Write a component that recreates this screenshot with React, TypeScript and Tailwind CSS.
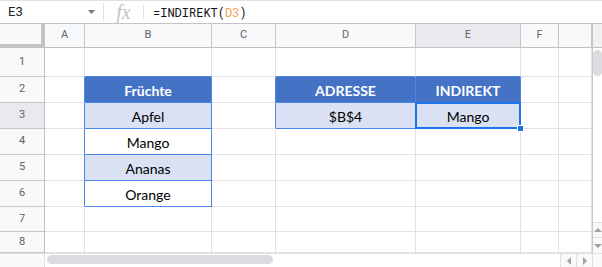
import React from "react";

const COLS = ["A", "B", "C", "D", "E", "F", "G"];
const ROWS = [1, 2, 3, 4, 5, 6, 7, 8];

type Kind = "head" | "light" | "white";
const table: Record<string, { kind: Kind; text: string }> = {
  B2: { kind: "head", text: "Früchte" },
  B3: { kind: "light", text: "Apfel" },
  B4: { kind: "white", text: "Mango" },
  B5: { kind: "light", text: "Ananas" },
  B6: { kind: "white", text: "Orange" },
  D2: { kind: "head", text: "ADRESSE" },
  E2: { kind: "head", text: "INDIREKT" },
  D3: { kind: "light", text: "$B$4" },
  E3: { kind: "light", text: "Mango" },
};

const inT = (c: number, r: number) => !!table[`${COLS[c]}${r}`];

function Cell({ c, r }: { c: number; r: number }) {
  const key = `${COLS[c]}${r}`;
  const t = table[key];
  const blueR = inT(c, r) || inT(c + 1, r);
  const blueB = inT(c, r) || inT(c, r + 1);
  const bg = t
    ? t.kind === "head"
      ? "bg-[#4472c4]"
      : t.kind === "light"
      ? "bg-[#d9e1f2]"
      : "bg-white"
    : "bg-white";
  const br = blueR ? "border-r-[#4a86e8]" : "border-r-[#e2e2e2]";
  const bb = blueB ? "border-b-[#4a86e8]" : "border-b-[#e2e2e2]";
  const text = t
    ? t.kind === "head"
      ? "text-white font-bold"
      : "text-black"
    : "";
  const selected = key === "E3";
  return (
    <div
      className={`relative border-r border-b ${br} ${bb} ${bg} ${text} flex items-center justify-center text-[14px] leading-none pt-[3px] overflow-visible`}
      style={{ fontFamily: "Lato, 'Open Sans', sans-serif" }}
    >
      {t ? t.text : null}
      {selected && (
        <>
          <div className="absolute -left-px -top-px -right-px -bottom-px border-2 border-[#1a73e8] z-10 pointer-events-none" />
          <div className="absolute right-[-4px] bottom-[-4px] w-[7px] h-[7px] bg-[#1a73e8] border border-white z-20" />
        </>
      )}
    </div>
  );
}

function ColHead({ label, selected }: { label: string; selected?: boolean }) {
  return (
    <div
      className={`flex items-center justify-center border-r border-b border-r-[#c7c7c7] border-b-[#c0c0c0] text-[11px] text-[#5f6368] ${
        selected ? "bg-[#e8eaed]" : "bg-[#f8f9fa]"
      }`}
      style={{ fontFamily: "Roboto, Arial, sans-serif" }}
    >
      {label}
    </div>
  );
}

function RowHead({ n, selected }: { n: number; selected?: boolean }) {
  return (
    <div
      className={`flex items-center justify-center border-r border-b border-r-[#c0c0c0] border-b-[#c7c7c7] text-[11px] text-[#5f6368] ${
        selected ? "bg-[#e8eaed]" : "bg-[#f8f9fa]"
      }`}
      style={{ fontFamily: "Roboto, Arial, sans-serif" }}
    >
      {n}
    </div>
  );
}

function Tri({ dir }: { dir: "up" | "down" | "left" | "right" }) {
  const pts =
    dir === "up"
      ? "0,5 5,0 10,5"
      : dir === "down"
      ? "0,0 10,0 5,5"
      : dir === "left"
      ? "5,0 5,10 0,5"
      : "0,0 0,10 5,5";
  const w = dir === "up" || dir === "down" ? 10 : 5;
  const h = dir === "up" || dir === "down" ? 5 : 10;
  return (
    <svg width={w * 0.8} height={h * 0.8} viewBox={`0 0 ${w} ${h}`}>
      <polygon points={pts} fill="#a0a0a0" />
    </svg>
  );
}

export default function App() {
  return (
    <div className="w-[602px] h-[267px] bg-white overflow-hidden flex flex-col">
      {/* formula bar */}
      <div className="h-[24px] shrink-0 flex items-center border-t border-t-[#e0e0e0] border-b border-b-[#c4c4c4] bg-white">
        <div
          className="w-[103px] h-full flex items-center justify-between pl-[8px] pr-[8px] text-[13px] text-[#222]"
          style={{ fontFamily: "Roboto, Arial, sans-serif" }}
        >
          <span>E3</span>
          <svg width="7" height="4" viewBox="0 0 7 4">
            <polygon points="0,0 7,0 3.5,4" fill="#777" />
          </svg>
        </div>
        <div className="w-px h-[18px] bg-[#e0e0e0]" />
        <div className="w-[39px] flex items-center justify-center">
          <span
            className="italic text-[20px] leading-none text-[#c4c4c4]"
            style={{ fontFamily: "'Liberation Serif', 'DejaVu Serif', serif" }}
          >
            fx
          </span>
        </div>
        <div className="w-px h-[14px] bg-[#e0e0e0]" />
        <div
          className="pl-[9px] text-[12px] text-[#111]"
          style={{ fontFamily: "'Roboto Mono', 'Liberation Mono', monospace" }}
        >
          =INDIREKT(<span className="text-[#f7a14f]">D3</span>)
        </div>
      </div>

      {/* main */}
      <div className="flex h-[229px] shrink-0">
        <div className="grid w-[592px] grid-cols-[45px_40px_127px_64px_140px_105px_38px_33px] grid-rows-[24px_29px_26px_26px_26px_26px_26px_25px_21px]">
          <div className="bg-[#f8f9fa] border-r-4 border-b-4 border-[#c4c4c4]" />
          {COLS.map((c) => (
            <ColHead key={c} label={c === "G" ? "" : c} selected={c === "E"} />
          ))}
          {ROWS.map((r) => (
            <React.Fragment key={r}>
              <RowHead n={r} selected={r === 3} />
              {COLS.map((_, ci) => (
                <Cell key={ci} c={ci} r={r} />
              ))}
            </React.Fragment>
          ))}
        </div>
        {/* vertical scrollbar */}
        <div className="w-[10px] flex flex-col border-l border-l-[#c7c7c7]">
          <div className="h-[24px] bg-[#f1f1f1] border-b border-b-[#c0c0c0]" />
          <div className="flex-1 bg-white relative">
            <div className="absolute left-[0px] right-[0px] top-[2px] h-[26px] rounded-full bg-[#dadce0]" />
          </div>
          <div className="h-[15px] flex items-center justify-center bg-[#f8f9fa] border-t border-t-[#e0e0e0]">
            <Tri dir="up" />
          </div>
          <div className="h-[16px] flex items-center justify-center bg-[#f8f9fa] border-t border-t-[#e0e0e0]">
            <Tri dir="down" />
          </div>
        </div>
      </div>

      {/* horizontal scrollbar */}
      <div className="h-[14px] shrink-0 flex border-t border-t-[#e0e0e0]">
        <div className="w-[45px] bg-[#f8f9fa] border-r border-r-[#e0e0e0]" />
        <div className="w-[515px] relative bg-white">
          <div className="absolute left-[2px] top-[1px] w-[226px] h-[9px] rounded-full bg-[#dadce0]" />
        </div>
        <div className="w-[16px] flex items-center justify-center bg-[#f8f9fa] border-l border-l-[#e0e0e0]">
          <Tri dir="left" />
        </div>
        <div className="w-[16px] flex items-center justify-center bg-[#f8f9fa] border-l border-l-[#e0e0e0]">
          <Tri dir="right" />
        </div>
        <div className="w-[10px] bg-[#f8f9fa] border-l border-l-[#e0e0e0]" />
      </div>
    </div>
  );
}
